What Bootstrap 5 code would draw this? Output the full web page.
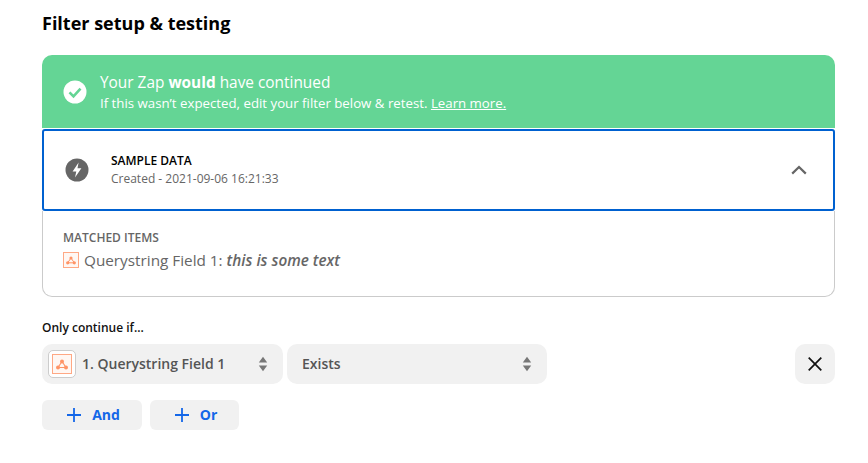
<!DOCTYPE html>
<html lang="en">
<head>
  <meta charset="UTF-8" />
  <title>Filter setup &amp; testing</title>
  <link href="https://cdn.jsdelivr.net/npm/bootstrap@5.3.0/dist/css/bootstrap.min.css" rel="stylesheet" />
  <style>
    body {
      background-color: #fff;
      font-family: "Open Sans", sans-serif;
      color: #666;
      overflow: hidden;
    }
    .page-wrap {
      width: 793px;
      margin-left: 42px;
      padding-top: 11px;
    }
    .page-title {
      font-size: 18px;
      line-height: 24px;
      font-weight: 700;
      color: #000;
      margin: 0 0 20px;
    }
    .result-banner {
      height: 73px;
      background-color: #64d595;
      color: #fff;
      border-radius: 10px 10px 0 0;
      padding-left: 21px;
      gap: 13px;
    }
    .banner-head {
      font-size: 15.4px;
      line-height: 20px;
      margin-top: 1px;
    }
    .banner-sub {
      font-size: 13.25px;
      line-height: 18px;
      margin-top: 1px;
    }
    .banner-sub a {
      color: #fff;
    }
    .sample-row {
      height: 82px;
      margin-top: 1px;
      border: 2px solid #0061d0;
      border-radius: 3px;
      padding: 0 26px 0 21px;
    }
    .sample-title {
      font-size: 12px;
      line-height: 17px;
      font-weight: 600;
      color: #000;
    }
    .sample-sub {
      font-size: 12px;
      line-height: 17px;
      margin-top: 1px;
    }
    .sample-text {
      margin-left: 22px;
      margin-bottom: 2px;
    }
    .matched-box {
      height: 86px;
      border: 1px solid #cbcbcb;
      border-top: 0;
      border-radius: 0 0 10px 10px;
      padding: 18px 20px 0;
    }
    .matched-label {
      font-size: 12px;
      line-height: 17px;
      font-weight: 600;
      color: #666;
    }
    .matched-value {
      font-size: 15.3px;
      line-height: 22px;
      margin-top: 3px;
      gap: 5px;
    }
    .matched-value em {
      font-weight: 600;
    }
    .field-label {
      font-size: 12px;
      line-height: 17px;
      font-weight: 600;
      color: #111;
      margin: 22px 0 8px;
    }
    .pick-box {
      height: 40px;
      background-color: #f1f1f1;
      border-radius: 10px;
      font-size: 14px;
      font-weight: 600;
      color: #555;
    }
    .pick-label {
      padding-bottom: 2px;
    }
    .pick-one {
      width: 241px;
      padding: 0 15px 0 6px;
    }
    .pick-two {
      width: 260px;
      margin-left: 4px;
      padding: 0 15px 0 15px;
    }
    .app-tile {
      width: 28px;
      height: 28px;
      background-color: #fff;
      border: 1px solid #ccc;
      border-radius: 5px;
      margin-right: 6px;
    }
    .close-box {
      width: 40px;
      height: 40px;
      background-color: #f1f1f1;
      border: 0;
      border-radius: 10px;
      padding: 0;
    }
    .add-row {
      margin-top: 16px;
    }
    .add-btn {
      height: 30px;
      background-color: #f1f1f1;
      border: 0;
      border-radius: 6px;
      color: #1467e8;
      font-size: 14px;
      font-weight: 700;
      gap: 11px;
      padding: 0 0 2px;
    }
    .add-btn svg {
      margin-top: 2px;
    }
    .add-and { width: 100px; padding-left: 3px; }
    .add-or { width: 89px; padding-left: 3px; }
  </style>
</head>
<body>
  <div class="page-wrap">
    <h1 class="page-title">Filter setup &amp; testing</h1>

    <div class="result-banner d-flex align-items-center">
      <svg width="24" height="24" viewBox="0 0 24 24">
        <circle cx="12" cy="12" r="11.5" fill="#fff" />
        <path d="M6.5 12.3l4 4 7-7.6" fill="none" stroke="#64d595" stroke-width="2.6" />
      </svg>
      <div>
        <div class="banner-head">Your Zap <strong>would</strong> have continued</div>
        <div class="banner-sub">If this wasn’t expected, edit your filter below &amp; retest. <a href="#">Learn more.</a></div>
      </div>
    </div>

    <div class="sample-row d-flex align-items-center">
      <svg width="24" height="24" viewBox="0 0 24 24">
        <circle cx="12" cy="12" r="11.5" fill="#666" />
        <path d="M13.6 4.5L7.6 13.4h3.7L10 19.5l6.4-9.2h-3.9z" fill="#fff" />
      </svg>
      <div class="sample-text flex-grow-1">
        <div class="sample-title">SAMPLE DATA</div>
        <div class="sample-sub">Created - 2021-09-06 16:21:33</div>
      </div>
      <svg width="16" height="10" viewBox="0 0 16 10">
        <path d="M1.2 8.6L8 2l6.8 6.6" fill="none" stroke="#666" stroke-width="2.2" />
      </svg>
    </div>

    <div class="matched-box">
      <div class="matched-label">MATCHED ITEMS</div>
      <div class="matched-value d-flex align-items-center">
        <svg width="16" height="16" viewBox="0 0 16 16">
          <rect x="0.5" y="0.5" width="15" height="15" fill="#fff7f3" stroke="#ffa884" />
          <circle cx="8" cy="6" r="1.6" fill="#ff9466" />
          <circle cx="4.7" cy="10.8" r="1.6" fill="#ff9466" />
          <circle cx="11.3" cy="10.8" r="1.6" fill="#ff9466" />
          <path d="M8 6l-3.3 4.8h6.6z" fill="none" stroke="#ff9466" stroke-width="1" />
        </svg>
        <span>Querystring Field 1: <em>this is some text</em></span>
      </div>
    </div>

    <div class="field-label">Only continue if...</div>

    <div class="d-flex">
      <div class="pick-box pick-one d-flex align-items-center">
        <span class="app-tile d-flex align-items-center justify-content-center">
          <svg width="20" height="20" viewBox="0 0 20 20">
            <rect x="0.5" y="0.5" width="19" height="19" fill="#fff7f3" stroke="#ffa884" />
            <circle cx="10" cy="7.5" r="2" fill="#ff9466" />
            <circle cx="6" cy="13.5" r="2" fill="#ff9466" />
            <circle cx="14" cy="13.5" r="2" fill="#ff9466" />
            <path d="M10 7.5l-4 6h8z" fill="none" stroke="#ff9466" stroke-width="1.1" />
          </svg>
        </span>
        <span class="pick-label flex-grow-1">1. Querystring Field 1</span>
        <svg width="10" height="16" viewBox="0 0 10 16">
          <path d="M5 0.8L9.2 6.4H0.8zM5 15.2L0.8 9.6h8.4z" fill="#777" />
        </svg>
      </div>
      <div class="pick-box pick-two d-flex align-items-center">
        <span class="pick-label flex-grow-1">Exists</span>
        <svg width="10" height="16" viewBox="0 0 10 16">
          <path d="M5 0.8L9.2 6.4H0.8zM5 15.2L0.8 9.6h8.4z" fill="#777" />
        </svg>
      </div>
      <button type="button" class="close-box ms-auto d-flex align-items-center justify-content-center" aria-label="Remove">
        <svg width="14" height="14" viewBox="0 0 14 14">
          <path d="M0.7 0.7l12.6 12.6M13.3 0.7L0.7 13.3" fill="none" stroke="#111" stroke-width="1.7" />
        </svg>
      </button>
    </div>

    <div class="add-row d-flex gap-2">
      <button type="button" class="add-btn add-and d-flex align-items-center justify-content-center">
        <svg width="14" height="14" viewBox="0 0 14 14">
          <path d="M7 0v14M0 7h14" fill="none" stroke="#1467e8" stroke-width="1.8" />
        </svg>
        And
      </button>
      <button type="button" class="add-btn add-or d-flex align-items-center justify-content-center">
        <svg width="14" height="14" viewBox="0 0 14 14">
          <path d="M7 0v14M0 7h14" fill="none" stroke="#1467e8" stroke-width="1.8" />
        </svg>
        Or
      </button>
    </div>
  </div>

  <script src="https://cdn.jsdelivr.net/npm/bootstrap@5.3.0/dist/js/bootstrap.bundle.min.js"></script>
</body>
</html>
